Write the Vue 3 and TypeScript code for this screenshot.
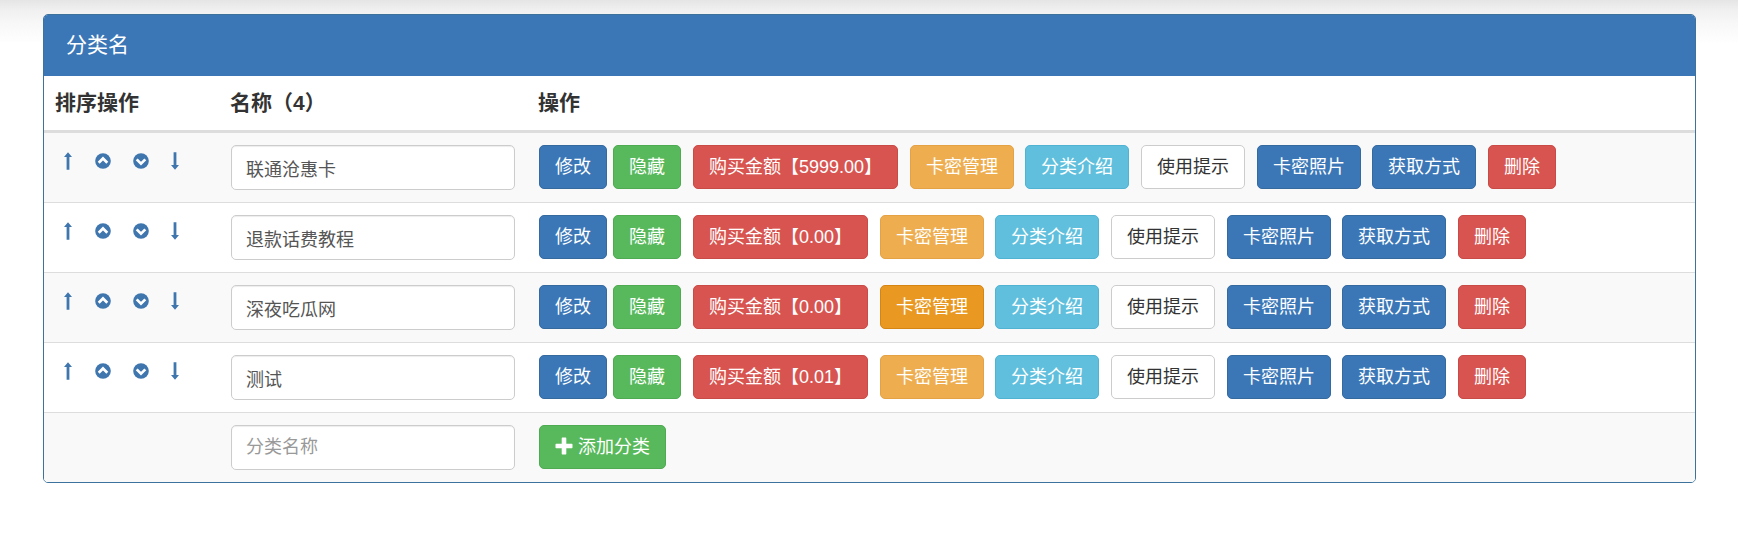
<script setup lang="ts">
import { ref } from 'vue'

interface Category {
  name: string
  price: string
  active?: boolean
}

const categories = ref<Category[]>([
  { name: '联通沧惠卡', price: '5999.00' },
  { name: '退款话费教程', price: '0.00' },
  { name: '深夜吃瓜网', price: '0.00', active: true },
  { name: '测试', price: '0.01' },
])
const newName = ref('')
</script>

<template>
  <main class="page">
    <section class="panel">
      <header class="panel-heading">分类名</header>
      <div class="row head">
        <div class="cell">排序操作</div>
        <div class="cell">名称（{{ categories.length }}）</div>
        <div class="cell">操作</div>
      </div>
      <div v-for="(item, i) in categories" :key="i" class="row">
        <div class="cell sort">
          <svg class="arrow" viewBox="0 0 10 18"><path d="M5 0.3 9 5H6.4V17.7H3.6V5H1Z" /></svg>
          <svg class="circle" viewBox="0 0 16 16"><circle cx="8" cy="8" r="7.8" /><path class="mark" d="M3.7 9.8 8 5.5l4.3 4.3" /></svg>
          <svg class="circle second" viewBox="0 0 16 16"><circle cx="8" cy="8" r="7.8" /><path class="mark" d="M3.7 6.4 8 10.7l4.3-4.3" /></svg>
          <svg class="arrow last" viewBox="0 0 10 18"><path d="M5 17.7 9 13H6.4V0.3H3.6V13H1Z" /></svg>
        </div>
        <div class="cell"><input v-model="item.name" class="field" type="text" /></div>
        <div class="cell actions">
          <button class="btn primary">修改</button>
          <button class="btn success tight">隐藏</button>
          <button class="btn danger">购买金额【{{ item.price }}】</button>
          <button class="btn warning" :class="{ active: item.active }">卡密管理</button>
          <button class="btn info near">分类介绍</button>
          <button class="btn default">使用提示</button>
          <button class="btn primary">卡密照片</button>
          <button class="btn primary near">获取方式</button>
          <button class="btn danger">删除</button>
        </div>
      </div>
      <div class="row">
        <div class="cell"></div>
        <div class="cell"><input v-model="newName" class="field add" type="text" placeholder="分类名称" /></div>
        <div class="cell actions">
          <button class="btn success create">
            <svg class="plus" viewBox="0 0 18 18"><path d="M7.4 0.5h3.2q.7 0 .7.7v5.5h5.5q.7 0 .7.7v3.2q0 .7-.7.7h-5.5v5.5q0 .7-.7.7H7.4q-.7 0-.7-.7v-5.5H1.2q-.7 0-.7-.7V7.4q0-.7.7-.7h5.5V1.2q0-.7.7-.7Z" /></svg>添加分类
          </button>
        </div>
      </div>
    </section>
  </main>
</template>

<style>
body {
  margin: 0;
  background: #fff;
}
</style>

<style scoped>
.page {
  box-sizing: border-box;
  height: 541px;
  padding: 14px 42px 0 43px;
  overflow: hidden;
  background: linear-gradient(#e6e5e5 0, #f0f0f0 10px, #f8f8f8 24px, #fff 44px);
  font-family: 'Liberation Sans', 'Noto Sans CJK SC', sans-serif;
  color: #333;
}
.panel {
  box-sizing: border-box;
  width: 1653px;
  height: 469px;
  border: 1px solid #3d729c;
  border-left-width: 1px;
  border-radius: 5px;
  overflow: hidden;
  background: #fff;
}
.panel-heading {
  box-sizing: border-box;
  height: 61px;
  padding: 0 22px;
  background: #3b77b7;
  color: #fff;
  font-size: 21px;
  font-weight: 400;
  line-height: 59px;
}
.row {
  display: grid;
  grid-template-columns: 175px 308px 1fr;
  box-sizing: border-box;
  height: 70px;
  border-top: 1px solid #ddd;
  background: #fff;
}
.row:nth-child(odd) {
  background: #f9f9f9;
}
.row.head {
  height: 57px;
  border-top: 0;
  border-bottom: 3px solid #ddd;
  background: #fff;
  font-size: 21px;
  font-weight: 700;
  line-height: 30px;
}
.row.head + .row {
  height: 69px;
  border-top: 0;
}
.cell {
  padding: 12px;
}
.head .cell {
  padding-left: 11px;
}
.sort {
  display: flex;
  align-items: flex-start;
  padding: 19px 0 0 19px;
  fill: #3f76ae;
}
.arrow {
  width: 10px;
  height: 18px;
}
.circle {
  width: 16px;
  height: 16px;
  margin: 1px 0 0 22px;
}
.circle.second {
  margin-left: 22px;
}
.arrow.last {
  margin-left: 21px;
}
.mark {
  fill: none;
  stroke: #fff;
  stroke-width: 2.7;
}
.field {
  display: block;
  box-sizing: border-box;
  width: 284px;
  height: 45px;
  padding: 0 14px;
  border: 1px solid #ccc;
  border-radius: 5px;
  background: #fff;
  box-shadow: inset 0 1px 1px rgba(0, 0, 0, 0.075);
  color: #555;
  font-family: inherit;
  font-size: 18px;
  outline: 0;
}
.field::placeholder {
  color: #999;
  opacity: 1;
}
.actions {
  display: flex;
  align-items: flex-start;
}
.btn {
  box-sizing: border-box;
  height: 44px;
  margin: 0 0 0 12px;
  padding: 0 15px;
  border: 1px solid;
  border-radius: 5px;
  font-family: inherit;
  font-size: 18px;
  line-height: 38px;
  white-space: nowrap;
  color: #fff;
}
.btn:first-child {
  margin-left: 0;
}
.btn.tight {
  margin-left: 6px;
}
.btn.near {
  margin-left: 11px;
}
.primary {
  background: #3b77b7;
  border-color: #356a9f;
}
.success {
  background: #58b95c;
  border-color: #4faa52;
}
.danger {
  background: #d85450;
  border-color: #c94b47;
}
.warning {
  background: #eeae50;
  border-color: #e4a244;
}
.warning.active {
  background: #e99821;
  border-color: #d58512;
}
.info {
  background: #5fbfdd;
  border-color: #50b3d2;
}
.default {
  background: #fff;
  border-color: #ccc;
  color: #333;
}
.create {
  display: flex;
  align-items: center;
}
.plus {
  width: 18px;
  height: 18px;
  margin: -3px 5px 0 0;
  fill: #fff;
}
</style>
